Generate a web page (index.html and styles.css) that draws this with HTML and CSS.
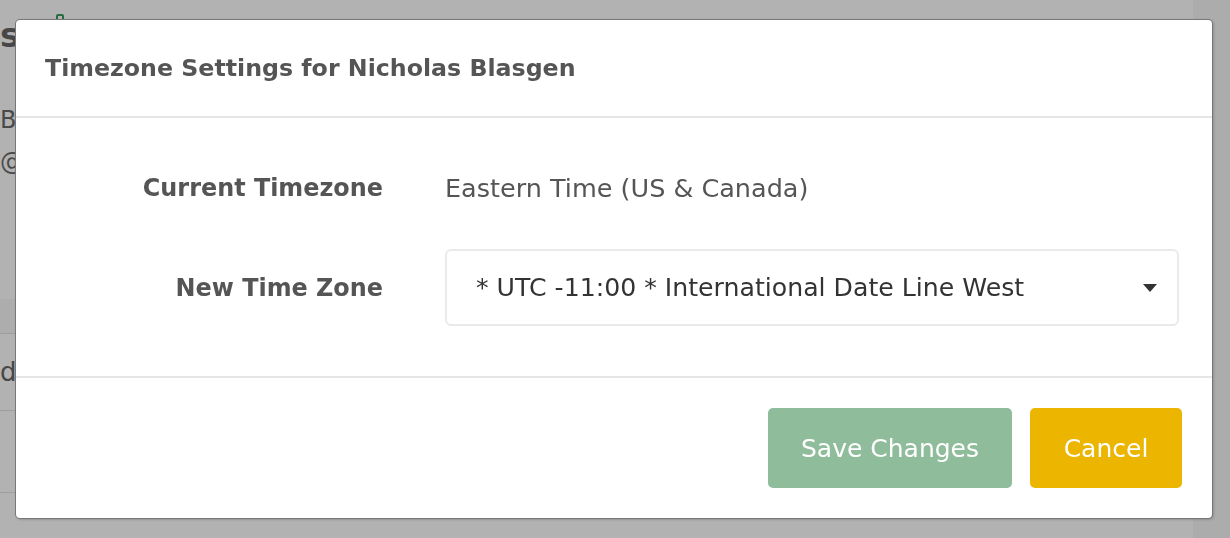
FILE: index.html
```html
<!DOCTYPE html>
<html lang="en">
<head>
    <meta charset="UTF-8">
    <meta name="viewport" content="width=device-width, initial-scale=1.0">
    <title>Timezone Settings</title>
    <link rel="stylesheet" href="styles.css">
</head>
<body>
    <!-- Page behind the modal -->
    <div class="page">
        <div class="page-main">
            <div class="page-head">
                <span class="page-title">s</span>
                <span class="page-icon"></span>
            </div>
            <div class="page-info">
                <div class="info-name">B</div>
                <div class="info-mail">@h</div>
            </div>
            <div class="page-row row-a"></div>
            <div class="page-row row-b">d</div>
            <div class="page-row row-c"></div>
        </div>
        <div class="page-side"></div>
    </div>
    <div class="backdrop"></div>

    <!-- Timezone modal -->
    <div class="modal">
        <div class="modal-header">
            <h3 class="modal-title">Timezone Settings for Nicholas Blasgen</h3>
        </div>
        <form class="modal-body">
            <div class="form-row">
                <label class="form-label">Current Timezone</label>
                <div class="form-value">Eastern Time (US &amp; Canada)</div>
            </div>
            <div class="form-row">
                <label class="form-label" for="timezone">New Time Zone</label>
                <div class="select-wrap">
                    <select id="timezone" name="timezone" class="select">
                        <option>* UTC -11:00 * International Date Line West</option>
                        <option>* UTC -10:00 * Hawaii</option>
                        <option>* UTC -05:00 * Eastern Time (US &amp; Canada)</option>
                    </select>
                    <svg class="caret" width="14" height="8" viewBox="0 0 14 8"><path d="M0 0h14L7 8z" fill="#333"/></svg>
                </div>
            </div>
        </form>
        <div class="modal-footer">
            <button type="button" class="btn btn-save">Save Changes</button>
            <button type="button" class="btn btn-cancel">Cancel</button>
        </div>
    </div>
</body>
</html>
```

FILE: styles.css
```css
html, body {
    margin: 0;
    height: 100%;
}

body {
    font-family: "DejaVu Sans", Verdana, sans-serif;
    background-color: #fff;
    overflow: hidden;
}

/* page behind */
.page {
    display: flex;
    height: 100%;
}

.page-main {
    flex: 1;
    color: #555;
}

.page-side {
    width: 37px;
    background-color: #f6f6f6;
}

.page-head {
    height: 70px;
    display: flex;
    align-items: center;
    gap: 36px;
}

.page-title {
    font-size: 34px;
    font-weight: bold;
    color: #666;
}

.page-icon {
    align-self: flex-start;
    width: 4px;
    height: 8px;
    margin-top: 14px;
    border: 2px solid #3c9a5a;
    border-radius: 2px;
}

.page-info {
    height: 229px;
    padding-top: 36px;
    box-sizing: border-box;
    font-size: 24px;
    color: #6a6a6a;
}

.info-mail {
    margin-top: 14px;
}

.row-a {
    height: 34px;
    background-color: #f8f8f8;
}

.row-b {
    height: 77px;
    font-size: 26px;
    color: #666;
    display: flex;
    align-items: center;
    border-top: 1px solid #e2e2e2;
    box-sizing: border-box;
}

.row-c {
    height: 81px;
    border-top: 1px solid #e2e2e2;
    border-bottom: 1px solid #e2e2e2;
}

.backdrop {
    position: fixed;
    inset: 0;
    background-color: rgba(0, 0, 0, 0.3);
}

/* modal */
.modal {
    position: absolute;
    left: 16px;
    top: 20px;
    width: 1196px;
    background-color: #fff;
    border-radius: 4px;
    box-shadow: 0 0 0 1px #787878, 1px 1px 3px rgba(0, 0, 0, 0.35);
}

.modal-header {
    height: 98px;
    padding: 0 29px;
    display: flex;
    align-items: center;
    border-bottom: 2px solid #e6e6e6;
    box-sizing: border-box;
}

.modal-title {
    margin: 0;
    font-size: 23.7px;
    font-weight: bold;
    color: #555;
}

.modal-body {
    padding: 31px 33px 50px 32px;
    display: flex;
    flex-direction: column;
    gap: 23px;
    border-bottom: 2px solid #e6e6e6;
}

.form-row {
    display: grid;
    grid-template-columns: 335px 1fr;
    column-gap: 62px;
    align-items: center;
    min-height: 77px;
}

.form-label {
    text-align: right;
    font-size: 23.9px;
    font-weight: bold;
    color: #555;
}

.form-value {
    font-size: 25.5px;
    color: #555;
}

.select-wrap {
    position: relative;
}

.select {
    width: 100%;
    height: 77px;
    padding: 0 60px 0 29px;
    border: 2px solid #eaeaea;
    border-radius: 6px;
    background-color: #fff;
    font-family: inherit;
    font-size: 25.2px;
    color: #333;
    appearance: none;
    -webkit-appearance: none;
    box-sizing: border-box;
}

.caret {
    position: absolute;
    right: 22px;
    top: 35px;
    pointer-events: none;
}

.modal-footer {
    padding: 30px 30px 30px;
    display: flex;
    justify-content: flex-end;
    gap: 18px;
}

.btn {
    height: 80px;
    border: none;
    border-radius: 5px;
    font-family: inherit;
    font-size: 25px;
    color: #fff;
    cursor: pointer;
}

.btn-save {
    width: 244px;
    background-color: #8fbc9b;
}

.btn-cancel {
    width: 152px;
    background-color: #ecb500;
}
```
